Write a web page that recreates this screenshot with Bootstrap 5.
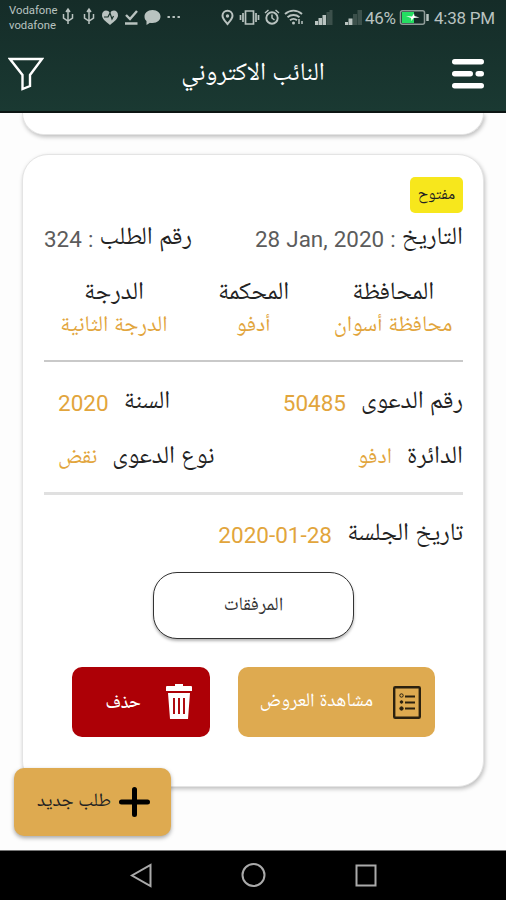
<!DOCTYPE html>
<html lang="ar" dir="rtl">
<head>
<meta charset="utf-8">
<meta name="viewport" content="width=device-width, initial-scale=1">
<title>النائب الاكتروني</title>
<link href="https://cdn.jsdelivr.net/npm/bootstrap@5.3.0/dist/css/bootstrap.min.css" rel="stylesheet">
<style>
  body { font-family: Roboto, "Noto Naskh Arabic UI", "Noto Naskh Arabic", "DejaVu Sans", sans-serif; background: #fdfdfd; color: #222; }
  svg { display: block; flex: none; }
  span { white-space: nowrap; }
  .phone { width: 506px; height: 900px; }
  .topbar { height: 113px; background: linear-gradient(#152c28, #1a3932); border-bottom: 2px solid #0c1513; }
  .status { height: 35px; color: #b9c3c0; font-size: 17px; padding-left: 9px; }
  .carrier { font-size: 11.3px; line-height: 15px; width: 49px; flex: none; padding-top: 1px; }
  .titlebar { height: 78px; padding: 0 22px 0 8px; }
  .page-title { font-size: 25.2px; color: #fff; line-height: 36px; padding-top: 2px; margin-right: -10px; }
  .feed { background: #fdfdfd; }
  .sheet { margin: 0 22px; background: #fff; border: 1px solid #e4e4e4; box-shadow: 1px 2px 4px rgba(0,0,0,.25); }
  .sheet-prev { height: 22px; border-radius: 0 0 26px 26px; border-top: 0; }
  .sheet-main { height: 633px; margin-top: 19px; border-radius: 26px; padding: 22px 20px 0 21px; }
  .tag { width: 53px; height: 36px; border-radius: 5px; background: #f7e71c; font-size: 16.3px; color: #222; padding-top: 2px; }
  .line-top { height: 52px; font-size: 24.9px; line-height: 36px; }
  .num { font-size: 22.4px; color: #5c5c5c; }
  .line-top .num { word-spacing: .6px; }
  .trio { margin-top: 13px; }
  .trio div div { height: 32px; line-height: 32px; font-size: 24.9px; }
  .gold { color: #e2a53c; }
  .trio div .gold { font-size: 22.3px; }
  .rule { height: 2px; background: #c9c9c9; margin: 18px 0 13px; }
  .rule-soft { height: 3px; background: #e0e0e0; margin: 7px 0 12px; }
  .line-pair { height: 55px; font-size: 24.9px; line-height: 36px; padding-left: 14px; }
  .line-pair > div { gap: 15px; }
  .line-pair .num { color: #e2a53c; font-size: 22.5px; padding-top: 1px; }
  .small-gold { font-size: 22.3px; color: #e2a53c; }
  .attach { width: 201px; height: 67px; margin-top: 10px; border: 1px solid #333; border-radius: 24px; background: #fff; box-shadow: 0 2px 3px rgba(0,0,0,.3); font-size: 19.2px; color: #333; padding-top: 5px; }
  .acts { margin-top: 28px; gap: 28px; padding-right: 28px; }
  .act { height: 70px; border-radius: 10px; color: #fff; font-size: 19.4px; border: 0; }
  .act span, .fab span { padding-top: 2px; }
  .act-view { width: 197px; background: #deaa50; padding: 0 14px 0 0; gap: 20px; }
  .act-del { width: 138px; background: #ad0006; padding: 0 18px 0 0; gap: 25px; font-size: 18px; font-weight: 600; }
  .fab { left: 14px; top: 655px; width: 157px; height: 68px; border-radius: 10px; background: #deaa50; color: #222; font-size: 19px; box-shadow: 0 2px 4px rgba(0,0,0,.35); border: 0; padding: 0 21px 0 0; gap: 8px; }
  .sysnav { height: 50px; background: #000; border-top: 1px solid #777; direction: ltr; }
</style>
</head>
<body>
<div class="phone d-flex flex-column overflow-hidden">
  <header class="topbar flex-shrink-0">
    <div class="status d-flex align-items-center" dir="ltr">
      <div class="carrier">Vodafone<br>vodafone</div>
      <svg width="448" height="35" viewBox="58 0 448 35" fill="none" stroke="#b9c3c0" stroke-width="1.5">
        <path id="usb" d="M68 10v14M63.500 14v4l4.500 3l4.500-3v-4M66 12l2-3 2 3" />
        <use href="#usb" x="21"/>
        <path d="M110 25c-5-4-8-6.500-8-9.800c0-5.500 6-6 8-2.200c2-3.800 8-3.300 8 2.200c0 3.300-3 5.800-8 9.800z" fill="#b9c3c0" stroke="none"/>
        <path d="M104 17h4l2-4 2 6 1.500-3" stroke="#173029" stroke-width="1.200"/>
        <path d="M126 15l4 4 7-8M125 23.500h12.500" stroke-width="2.400"/>
        <path d="M152.500 10c5 0 8 3 8 6.500s-3 6.500-8 6.500c-1 0-2 0-2.500-.3L146.500 25v-4c-1.500-1.200-2-2.800-2-4.500c0-3.500 3-6.500 8-6.500z" fill="#b9c3c0" stroke="none"/>
        <path d="M167.500 17h12.500" stroke-width="2" stroke-dasharray="2.400 2.600"/>
        <path d="M227.500 24c-3.500-4-5-5.500-5-8.300a5 5 0 0 1 10 0c0 2.800-1.500 4.300-5 8.300z" stroke-width="2"/>
        <circle cx="227.500" cy="16" r="1.700" fill="#b9c3c0" stroke="none"/>
        <path d="M245.500 11h8v13h-8zM243 13v9M256 13v9M240.500 15v5M258.500 15v5" stroke-width="1.700"/>
        <circle cx="272" cy="18" r="5.700" stroke-width="1.900"/><path d="M272 14.500v3.500l2.500 2M265 13l3.500-3M279 13l-3.500-3" stroke-width="1.500"/>
        <path d="M285 14c5-4.500 12-4.500 17 0M287.500 17.300c3.500-3 8.500-3 12 0M290 20.300c2-1.800 5-1.800 7 0" stroke-width="1.900"/><circle cx="293.500" cy="23" r="1.500" fill="#b9c3c0" stroke="none"/><path d="M299 19v5M302 21v3" stroke-width="1.500"/>
        <g stroke="none" fill="#b9c3c0"><path d="M315 21h3v4h-3zM318.500 18h3.500v7h-3.500zM322.500 15h3.500v10h-3.500z"/><path d="M326.500 12h3v13h-3zM329.500 10h3v15h-3z" fill="#3c504b"/>
        <path d="M345 22h3v3h-3zM348.500 18.500h4v6.500h-4z"/><path d="M353 14h4v11h-4zM357.500 10h4.500v15h-4.500z" fill="#3c504b"/></g>
        <rect x="400.500" y="10.700" width="24" height="13.600" rx="2" stroke="#8f9b98" stroke-width="1.500"/>
        <rect x="402" y="12" width="12" height="11" fill="#25dd62" stroke="none"/>
        <path d="M427.500 14v7" stroke-width="2.500"/>
        <path d="M406 16l6 .5 2-3 .5 2.500 5 1.500-6 .5-2 3-.5-3z" fill="#fff" stroke="none"/>
        <g fill="#b9c3c0" stroke="none" font-family="Roboto" font-size="17"><text x="365" y="23.500" textLength="31">46%</text><text x="434" y="24" textLength="61">4:38 PM</text></g>
      </svg>
    </div>
    <div class="titlebar d-flex align-items-center justify-content-between">
      <svg width="32" height="32" viewBox="0 0 32 32" fill="#fff"><rect y="1" width="32" height="5.500" rx="2.700"/><rect y="13" width="21" height="5.500" rx="2.700"/><rect x="23.500" y="13" width="8.500" height="5.500" rx="2.700"/><rect y="25" width="32" height="5.500" rx="2.700"/></svg>
      <div class="page-title">النائب الاكتروني</div>
      <svg width="36" height="34" viewBox="0 0 36 34" fill="none" stroke="#fff" stroke-width="2.400"><path d="M2 2h32L22 18v11l-7.500 3V18z"/></svg>
    </div>
  </header>
  <main class="feed position-relative flex-grow-1 overflow-hidden">
    <div class="sheet sheet-prev"></div>
    <section class="sheet sheet-main">
      <div class="tag d-flex align-items-center justify-content-center"><span>مفتوح</span></div>
      <div class="line-top d-flex align-items-center justify-content-between">
        <div><span>التاريخ</span><span class="num"> : </span><span class="num" dir="ltr">28 Jan, 2020</span></div>
        <div><span>رقم الطلب</span><span class="num"> : 324</span></div>
      </div>
      <div class="trio row g-0 text-center">
        <div class="col"><div>المحافظة</div><div class="gold">محافظة أسوان</div></div>
        <div class="col"><div>المحكمة</div><div class="gold">أدفو</div></div>
        <div class="col"><div>الدرجة</div><div class="gold">الدرجة الثانية</div></div>
      </div>
      <div class="rule"></div>
      <div class="line-pair d-flex align-items-center justify-content-between">
        <div class="d-flex align-items-center"><span>رقم الدعوى</span><span class="num">50485</span></div>
        <div class="d-flex align-items-center"><span>السنة</span><span class="num">2020</span></div>
      </div>
      <div class="line-pair d-flex align-items-center justify-content-between">
        <div class="d-flex align-items-center"><span>الدائرة</span><span class="small-gold">ادفو</span></div>
        <div class="d-flex align-items-center"><span>نوع الدعوى</span><span class="small-gold">نقض</span></div>
      </div>
      <div class="rule-soft"></div>
      <div class="line-pair d-flex align-items-center">
        <div class="d-flex align-items-center"><span>تاريخ الجلسة</span><span class="num" dir="ltr">2020-01-28</span></div>
      </div>
      <button class="attach d-flex align-items-center justify-content-center mx-auto"><span>المرفقات</span></button>
      <div class="acts d-flex">
        <button class="act act-view d-flex align-items-center">
          <svg width="28" height="33" viewBox="0 0 28 33" fill="none" stroke="#2b210f"><rect x="1.200" y="1.200" width="25.600" height="30.600" rx="1" stroke-width="2.400"/><path d="M12 10.500h10M12 16.500h10M12 22.500h10" stroke-width="2"/><circle cx="8.500" cy="9.500" r="1.700"/><circle cx="8.500" cy="16" r="1.300" fill="#2b210f"/><circle cx="8.500" cy="22.500" r="1.700" fill="#2b210f"/></svg>
          <span>مشاهدة العروض</span>
        </button>
        <button class="act act-del d-flex align-items-center">
          <svg width="26" height="36" viewBox="0 0 26 36" fill="#fff"><path d="M0 3q0-1 1-1h8V0h8v2h8q1 0 1 1v4H0zM2 9h22l-2 26H4z"/><path d="M8 14v16M13 14v16M18 14v16" stroke="#ad0006" stroke-width="1.900"/></svg>
          <span>حذف</span>
        </button>
      </div>
    </section>
    <button class="fab position-absolute d-flex align-items-center">
      <svg width="31" height="30" viewBox="0 0 31 30" stroke="#000" stroke-width="5" stroke-linecap="round"><path d="M2.500 15h26M15.500 2.500v25"/></svg>
      <span>طلب جديد</span>
    </button>
  </main>
  <nav class="sysnav flex-shrink-0">
    <svg width="506" height="49" viewBox="0 851 506 49" fill="none" stroke="#aaa" stroke-width="2"><path d="M150.500 865v21L132 875.500z"/><circle cx="253.500" cy="875" r="11"/><rect x="356.500" y="865.500" width="19" height="20"/></svg>
  </nav>
</div>
<script src="https://cdn.jsdelivr.net/npm/bootstrap@5.3.0/dist/js/bootstrap.bundle.min.js"></script>
</body>
</html>
